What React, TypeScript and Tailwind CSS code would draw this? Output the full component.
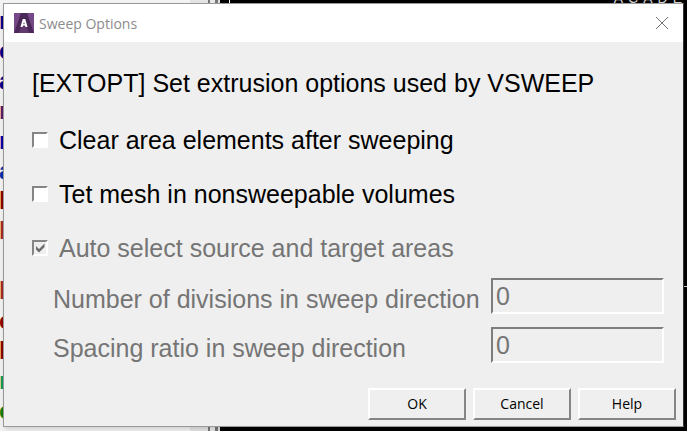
import { ReactNode } from "react";

const logLines = [
  { text: "n", color: "text-[#00008b]" },
  { text: "c", color: "text-[#00008b]" },
  { text: "a", color: "text-[#00008b]" },
  { text: "n", color: "text-[#5a1a6b]" },
  { text: "n", color: "text-[#0000a8]" },
  { text: "a", color: "text-[#0033aa]" },
  { text: "h", color: "text-[#8b0000]" },
  { text: "h", color: "text-[#a52a2a]" },
  { text: "", color: "" },
  { text: "h", color: "text-[#a52a2a]" },
  { text: "c", color: "text-[#8b0000]" },
  { text: "h", color: "text-[#8b0000]" },
  { text: "n", color: "text-[#109a60]" },
  { text: "c", color: "text-[#108010]" },
];

function Backdrop() {
  return (
    <div aria-hidden="true" className="absolute inset-0 -z-10 flex overflow-hidden bg-black">
      <div className="w-[190px] shrink-0 overflow-hidden bg-[#f3f3f3] pt-[6px] text-[24px] font-bold leading-[30px]">
        {logLines.map((line, i) => (
          <div key={i} className={`-ml-px h-[30px] ${line.color}`}>
            {line.text}
          </div>
        ))}
      </div>
      <div className="w-[18px] shrink-0 bg-[#e4e4e4]" />
      <div className="w-[2px] shrink-0 bg-[#777777]" />
      <div className="w-[5px] shrink-0 bg-[#e8e8e8]" />
      <div className="w-[3px] shrink-0 bg-[#777777]" />
      <div className="w-[2px] shrink-0 bg-[#e0e0e0]" />
      <div className="relative grow">
        <div className="ml-[9px] h-[3px] w-px bg-white" />
        <div className="absolute -top-[10px] right-0 whitespace-nowrap text-[14px] leading-[16px] tracking-[5px] text-[#d0d0d0]">
          ACADE
        </div>
        <div className="absolute right-0 top-[286px] h-px w-[4px] bg-[#cccccc]" />
      </div>
    </div>
  );
}

function AppIcon() {
  return (
    <svg width="20" height="20" viewBox="0 0 20 20" aria-hidden="true">
      <rect width="20" height="20" fill="#633b70" />
      <path d="M0 0h7L1 20H0z" fill="#754987" />
      <path d="M13 0h7v20h-1z" fill="#754987" />
      <path d="M7 0h6l7 20h-5L10 7 5 20H0z" fill="#4a2858" />
      <path d="M5 20 10 8l5 12z" fill="#60386e" />
      <path
        d="M8.8 6h2.4l2.4 8h-2.2l-.4-1.4H9L8.6 14H6.4zM10 8.7l-.6 2.2h1.2z"
        fill="#ffffff"
        fillRule="evenodd"
      />
    </svg>
  );
}

function Tick({ label, checked, disabled }: { label: string; checked?: boolean; disabled?: boolean }) {
  return (
    <label className={`flex items-center gap-[11px] ${disabled ? "text-[#757575]" : "text-black"}`}>
      <span className="grid shrink-0">
        <input
          type="checkbox"
          defaultChecked={checked}
          disabled={disabled}
          className={`peer col-start-1 row-start-1 size-4 appearance-none border-2 border-b-white border-l-[#858585] border-r-white border-t-[#858585] ${
            disabled ? "bg-[#efefef]" : "bg-white"
          }`}
        />
        <svg
          viewBox="0 0 16 16"
          className="pointer-events-none invisible col-start-1 row-start-1 size-4 peer-checked:visible"
          aria-hidden="true"
        >
          <path d="M4 6v3.5L7 12.5 12.5 7V3.5L7 9z" fill="#6c6c6c" />
        </svg>
      </span>
      <span>{label}</span>
    </label>
  );
}

function Field({ id, label }: { id: string; label: string }) {
  return (
    <div className="flex items-center justify-between">
      <label htmlFor={id} className="pt-[6px]">
        {label}
      </label>
      <input
        id={id}
        type="text"
        defaultValue="0"
        disabled
        className="h-9 w-[173px] border-2 border-b-white border-l-[#7d7d7d] border-r-white border-t-[#7d7d7d] bg-[#efefef] px-[3px] text-[#757575]"
      />
    </div>
  );
}

function PushButton({ children }: { children: ReactNode }) {
  return (
    <button
      type="button"
      className="h-8 w-[98px] border-2 border-b-[#858585] border-l-white border-r-[#858585] border-t-white bg-[#efefef] font-['Open_Sans','Noto_Sans',sans-serif] text-[14px] leading-4 text-black"
    >
      {children}
    </button>
  );
}

export default function App() {
  return (
    <div className="relative isolate min-h-screen overflow-hidden px-[3px] pt-[3px] pb-1 font-['Liberation_Sans',Arial,sans-serif]">
      <Backdrop />
      <section
        role="dialog"
        aria-labelledby="dialog-title"
        className="border border-[#999999] border-r-[#333333] bg-[#efefef] shadow-md"
      >
        <header className="flex h-[38px] items-center gap-[5px] bg-white pl-[10px] pr-[14px]">
          <AppIcon />
          <h1
            id="dialog-title"
            className="grow font-['Open_Sans','Noto_Sans',sans-serif] text-[14px] text-[#8c8c8c]"
          >
            Sweep Options
          </h1>
          <button type="button" aria-label="Close" className="p-0">
            <svg width="14" height="14" viewBox="0 0 14 14" aria-hidden="true">
              <path d="M1 1l12 12M13 1L1 13" stroke="#777777" fill="none" />
            </svg>
          </button>
        </header>
        <form className="pb-[6px] pl-7 pr-[7px] pt-[27px] text-[25px] leading-[28px]">
          <p>[EXTOPT] Set extrusion options used by VSWEEP</p>
          <div className="mt-[29px] flex flex-col gap-[26px]">
            <Tick label="Clear area elements after sweeping" />
            <Tick label="Tet mesh in nonsweepable volumes" />
            <Tick label="Auto select source and target areas" checked disabled />
          </div>
          <div className="mt-[16px] flex flex-col gap-[13px] pl-[21px] pr-[12px] text-[#757575]">
            <Field id="divisions" label="Number of divisions in sweep direction" />
            <Field id="ratio" label="Spacing ratio in sweep direction" />
          </div>
          <div className="mt-[25px] flex justify-end gap-[7px]">
            <PushButton>OK</PushButton>
            <PushButton>Cancel</PushButton>
            <PushButton>Help</PushButton>
          </div>
        </form>
      </section>
    </div>
  );
}
